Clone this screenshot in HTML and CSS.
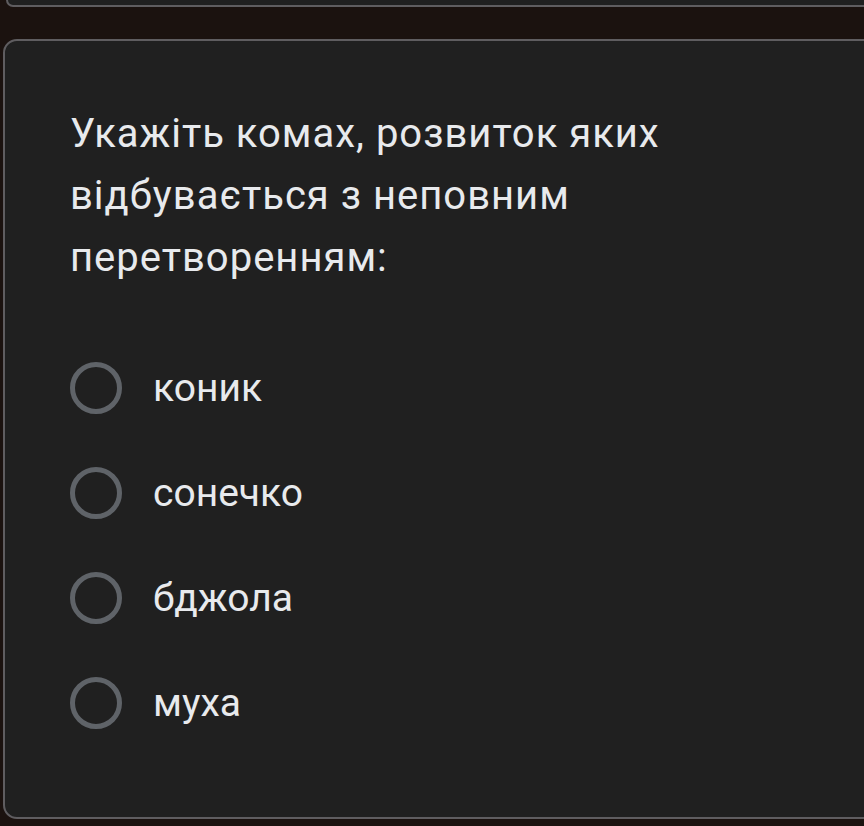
FILE: index.html
```html
<!DOCTYPE html>
<html lang="uk">
<head>
<meta charset="utf-8">
<link rel="stylesheet" href="styles.css">
</head>
<body>
<div class="prev-card"></div>
<div class="card">
  <div class="question">Укажіть комах, розвиток яких відбувається з неповним перетворенням:</div>
  <div class="options">
    <div class="option"><span class="radio"></span><span class="label">коник</span></div>
    <div class="option"><span class="radio"></span><span class="label">сонечко</span></div>
    <div class="option"><span class="radio"></span><span class="label">бджола</span></div>
    <div class="option"><span class="radio"></span><span class="label">муха</span></div>
  </div>
</div>
</body>
</html>
```
FILE: styles.css
```css
html, body {
  margin: 0;
  padding: 0;
  background: #1b120f;
  overflow: hidden;
  width: 864px;
  height: 826px;
}
body {
  font-family: Roboto, "Noto Sans", sans-serif;
  color: #e8eaed;
}
.prev-card {
  height: 5px;
  margin-left: 6px;
  width: 900px;
  background: #202020;
  border: 2px solid #5f5d60;
  border-top: none;
  border-radius: 0 0 14px 14px;
}
.card {
  margin-top: 32px;
  margin-left: 3px;
  width: 900px;
  height: 780px;
  box-sizing: border-box;
  background: #202020;
  border: 2px solid #5f5d60;
  border-radius: 14px;
  padding: 62px 0 0 65px;
}
.question {
  font-size: 40px;
  letter-spacing: 1px;
  line-height: 62px;
  width: 640px;
}
.options {
  margin-top: 46px;
  display: flex;
  flex-direction: column;
}
.option {
  height: 105px;
  display: flex;
  align-items: center;
}
.radio {
  width: 52px;
  height: 52px;
  box-sizing: border-box;
  border: 5px solid #5f6368;
  border-radius: 50%;
  flex: none;
}
.label {
  margin-left: 31px;
  font-size: 39px;
}
```
